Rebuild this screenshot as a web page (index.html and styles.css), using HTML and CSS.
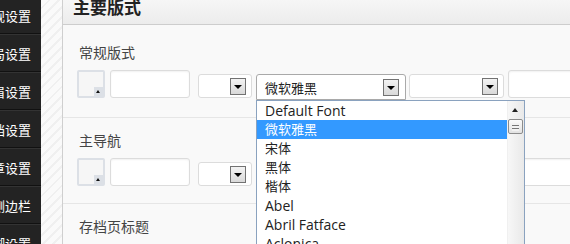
FILE: index.html
```html
<!DOCTYPE html>
<html lang="zh-CN">
<head>
    <meta charset="UTF-8">
    <meta name="viewport" content="width=device-width, initial-scale=1.0">
    <title>主题设置 - 主要版式</title>
    <link rel="stylesheet" href="styles.css">
</head>
<body>
    <div class="page">
        <aside class="sidebar">
            <div class="nav-item">常规设置</div>
            <div class="nav-item">布局设置</div>
            <div class="nav-item">页眉设置</div>
            <div class="nav-item">存档设置</div>
            <div class="nav-item">文章设置</div>
            <div class="nav-item">侧边栏</div>
            <div class="nav-item">页脚设置</div>
        </aside>
        <div class="gutter"></div>

        <main class="panel">
            <div class="panel-header">主要版式</div>

            <section class="group group-first">
                <div class="group-title">常规版式</div>
                <div class="controls">
                    <div class="color-pick"><span class="color-arrow"></span></div>
                    <div class="text-field"></div>
                    <div class="select select-size"><span class="select-btn"></span></div>
                    <div class="select select-font is-open">
                        <span class="select-value">微软雅黑</span>
                        <span class="select-btn"></span>
                        <div class="dropdown">
                            <ul class="dropdown-list">
                                <li>Default Font</li>
                                <li class="cjk active">微软雅黑</li>
                                <li class="cjk">宋体</li>
                                <li class="cjk">黑体</li>
                                <li class="cjk">楷体</li>
                                <li>Abel</li>
                                <li>Abril Fatface</li>
                                <li>Aclonica</li>
                            </ul>
                            <div class="scrollbar">
                                <span class="scroll-up"></span>
                                <span class="scroll-thumb"></span>
                            </div>
                        </div>
                    </div>
                    <div class="select select-weight"><span class="select-btn"></span></div>
                    <div class="text-field text-wide"></div>
                </div>
            </section>

            <section class="group">
                <div class="group-title">主导航</div>
                <div class="controls">
                    <div class="color-pick"><span class="color-arrow"></span></div>
                    <div class="text-field"></div>
                    <div class="select select-size"><span class="select-btn"></span></div>
                    <div class="select select-font"><span class="select-btn"></span></div>
                    <div class="select select-weight"><span class="select-btn"></span></div>
                    <div class="text-field text-wide"></div>
                </div>
            </section>

            <section class="group">
                <div class="group-title">存档页标题</div>
            </section>
        </main>
    </div>
</body>
</html>
```

FILE: styles.css
```css
body {
    margin: 0;
    height: 244px;
    overflow: hidden;
    font-family: "Noto Sans CJK SC", sans-serif;
    background-color: #f9f9f9;
}
.page {
    display: flex;
    height: 100%;
}
.sidebar {
    width: 41px;
    flex-shrink: 0;
    margin-top: -4px;
    background: #232323;
}
.nav-item {
    height: 36px;
    display: flex;
    justify-content: flex-end;
    align-items: center;
    padding-right: 10px;
    overflow: hidden;
    white-space: nowrap;
    color: #fff;
    font-size: 13px;
    border-top: 1px solid #333;
    border-bottom: 1px solid #111;
}
.gutter {
    width: 21px;
    flex-shrink: 0;
    background: repeating-linear-gradient(135deg, #fafafa 0 5px, #f0f0f0 5px 7px);
    border-right: 1px solid #cfcfcf;
}
.panel {
    flex: 1;
    min-width: 0;
    background: #f9f9f9;
}
.panel-header {
    height: 24px;
    line-height: 14px;
    padding-left: 10px;
    font-size: 17px;
    font-weight: bold;
    color: #222;
    background: linear-gradient(#f6f6f6, #ececec);
    border-bottom: 1px solid #cdcdcd;
}
.group {
    padding: 13px 0 17px 14px;
    border-bottom: 1px solid #e6e6e6;
}
.group-first {
    padding-top: 18px;
}
.group-title {
    padding-left: 2px;
    line-height: 18px;
    font-size: 14px;
    color: #444;
}
.controls {
    display: flex;
    align-items: flex-start;
    margin-top: 9px;
}
.controls > * {
    flex-shrink: 0;
}
.color-pick {
    position: relative;
    box-sizing: border-box;
    width: 28px;
    height: 28px;
    border: 2px solid #dce0e6;
    border-radius: 2px;
    background: #f6f6f6;
}
.color-arrow {
    position: absolute;
    right: 0;
    bottom: 0;
    width: 9px;
    height: 9px;
    background: #dce0e6;
}
.color-arrow::after {
    content: "";
    position: absolute;
    left: 2px;
    top: 3px;
    border-left: 2.5px solid transparent;
    border-right: 2.5px solid transparent;
    border-bottom: 3px solid #111;
}
.text-field {
    box-sizing: border-box;
    width: 80px;
    height: 28px;
    margin-left: 5px;
    border: 1px solid #dcdcdc;
    border-radius: 3px;
    background: #fff;
    box-shadow: inset 0 1px 2px rgba(0,0,0,0.06);
}
.text-wide {
    width: 100px;
    margin-left: 4px;
}
.select {
    position: relative;
    box-sizing: border-box;
    height: 24px;
    margin-top: 4px;
    display: flex;
    align-items: center;
    justify-content: flex-end;
    padding-right: 5px;
    border: 1px solid #dcdcdc;
    border-radius: 3px;
    background: #fff;
}
.select-size {
    width: 54px;
    margin-left: 8px;
}
.select-font {
    width: 150px;
    margin-left: 4px;
    padding-right: 6px;
}
.select-font.is-open {
    height: 26px;
    justify-content: space-between;
    border-color: #a9a9a9;
    border-radius: 3px 3px 0 0;
}
.select-weight {
    width: 95px;
    margin-left: 3px;
}
.select-value {
    padding-left: 8px;
    font-size: 13px;
    color: #222;
}
.select-btn {
    position: relative;
    box-sizing: border-box;
    width: 16px;
    height: 17px;
    border: 1px solid #727272;
    background: linear-gradient(#f3f3f3, #d9d9d9);
}
.select-btn::after {
    content: "";
    position: absolute;
    left: 3px;
    top: 6px;
    border-left: 4px solid transparent;
    border-right: 4px solid transparent;
    border-top: 4px solid #000;
}
.dropdown {
    position: absolute;
    z-index: 5;
    left: -1px;
    top: calc(100% + 1px);
    box-sizing: border-box;
    width: 269px;
    height: 160px;
    display: flex;
    border: 1px solid #8aa2bf;
    background: #fff;
}
.dropdown-list {
    flex: 1;
    margin: 0;
    padding: 0;
    list-style: none;
    font-family: "Open Sans", "Noto Sans CJK SC", sans-serif;
    font-size: 14px;
    color: #222;
}
.dropdown-list li {
    height: 19px;
    line-height: 19px;
    padding-left: 8px;
    white-space: nowrap;
}
.dropdown-list li.cjk {
    font-size: 13px;
}
.dropdown-list li.active {
    background: #3399ff;
    color: #fff;
}
.scrollbar {
    position: relative;
    width: 16px;
    background: linear-gradient(to right, #f7f7f7, #e9e9e9);
    border-left: 1px solid #f0f0f0;
}
.scroll-up {
    position: absolute;
    left: 4px;
    top: 7px;
    border-left: 3.5px solid transparent;
    border-right: 3.5px solid transparent;
    border-bottom: 4px solid #222;
}
.scroll-thumb {
    position: absolute;
    left: 0;
    top: 18px;
    box-sizing: border-box;
    width: 15px;
    height: 15px;
    border: 1px solid #8c8c8c;
    border-radius: 2px;
    background: repeating-linear-gradient(#f2f2f2 0 2px, #777 2px 3px) 3px 3px / 7px 8px no-repeat, linear-gradient(#fafafa, #e2e2e2);
}
```
